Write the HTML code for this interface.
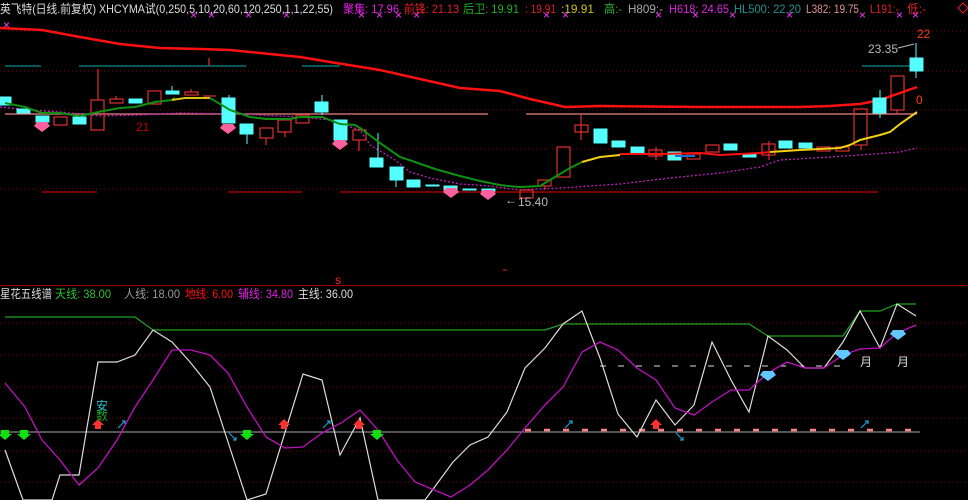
<!DOCTYPE html>
<html><head><meta charset="utf-8"><style>
html,body{margin:0;padding:0;background:#000;width:968px;height:500px;overflow:hidden}
svg{display:block}
text{font-family:"Liberation Sans","Noto Sans CJK SC",sans-serif;font-size:12px}
</style></head><body>
<svg width="968" height="500" viewBox="0 0 968 500" xmlns="http://www.w3.org/2000/svg">
<!-- grid -->
<g stroke="#8b0000" stroke-dasharray="1,3" stroke-width="1">
<line x1="0" y1="71" x2="968" y2="71"/><line x1="0" y1="110" x2="968" y2="110"/>
<line x1="0" y1="149" x2="968" y2="149"/><line x1="0" y1="189" x2="968" y2="189"/>
<line x1="0" y1="31" x2="968" y2="31"/>
<line x1="0" y1="323" x2="968" y2="323"/><line x1="0" y1="355" x2="968" y2="355"/>
<line x1="0" y1="387" x2="968" y2="387"/><line x1="0" y1="418" x2="968" y2="418"/>
<line x1="0" y1="451" x2="968" y2="451"/><line x1="0" y1="482" x2="968" y2="482"/>
</g>
<line x1="0" y1="285.5" x2="968" y2="285.5" stroke="#a00000"/>
<!-- header -->
<text x="0" y="13" fill="#ddd" textLength="333" lengthAdjust="spacingAndGlyphs">英飞特(日线.前复权) XHCYMA试(0,250,5,10,20,60,120,250,1,1,22,55)</text>
<text x="343" y="13" fill="#e020e0" textLength="56" lengthAdjust="spacingAndGlyphs">聚集: 17.96</text>
<text x="404" y="13" fill="#e02020" textLength="55" lengthAdjust="spacingAndGlyphs">前锋: 21.13</text>
<text x="463" y="13" fill="#20b020" textLength="56" lengthAdjust="spacingAndGlyphs">后卫: 19.91</text>
<text x="525" y="13" fill="#e02020" textLength="31" lengthAdjust="spacingAndGlyphs">: 19.91</text>
<text x="561" y="13" fill="#d0c020" textLength="33" lengthAdjust="spacingAndGlyphs">:19.91</text>
<text x="604" y="13" fill="#30b030" textLength="18" lengthAdjust="spacingAndGlyphs">高:-</text>
<text x="628" y="13" fill="#aaa" textLength="35" lengthAdjust="spacingAndGlyphs">H809:-</text>
<text x="669" y="13" fill="#e020e0" textLength="60" lengthAdjust="spacingAndGlyphs">H618: 24.65</text>
<text x="734" y="13" fill="#209090" textLength="67" lengthAdjust="spacingAndGlyphs">HL500: 22.20</text>
<text x="806" y="13" fill="#e09090" textLength="53" lengthAdjust="spacingAndGlyphs">L382: 19.75</text>
<text x="870" y="13" fill="#e02020" textLength="29" lengthAdjust="spacingAndGlyphs">L191:-</text>
<text x="907" y="13" fill="#e02020" textLength="19" lengthAdjust="spacingAndGlyphs">低:-</text>
<path d="M958 8 L963 3 L968 8 L963 13Z" fill="none" stroke="#e02020"/>
<text x="3" y="29" fill="#ff40ff" font-size="8">×</text>
<g fill="#ff30ff">
<text x="190" y="19" font-size="8">×</text><text x="208" y="19" font-size="8">×</text><text x="245" y="19" font-size="8">×</text><text x="283" y="19" font-size="8">×</text><text x="358" y="19" font-size="8">×</text><text x="376" y="19" font-size="8">×</text><text x="395" y="19" font-size="8">×</text><text x="413" y="19" font-size="8">×</text><text x="543" y="19" font-size="8">×</text><text x="562" y="19" font-size="8">×</text><text x="655" y="19" font-size="8">×</text><text x="692" y="19" font-size="8">×</text><text x="729" y="19" font-size="8">×</text><text x="786" y="19" font-size="8">×</text><text x="859" y="19" font-size="8">×</text><text x="896" y="19" font-size="8">×</text><text x="912" y="19" font-size="8">×</text>
</g>
<!-- horizontal refs -->
<g stroke="#0a8a8a" stroke-width="1.2"><line x1="5" y1="66" x2="41" y2="66"/><line x1="79" y1="66" x2="246" y2="66"/><line x1="302" y1="66" x2="340" y2="66"/><line x1="862" y1="66" x2="915" y2="66"/></g>
<g stroke="#f08080" stroke-width="1.2"><line x1="5" y1="114" x2="488" y2="114"/><line x1="526" y1="114" x2="917" y2="114"/></g>
<g stroke="#c00000" stroke-width="1.2"><line x1="42" y1="192" x2="97" y2="192"/><line x1="228" y1="192" x2="302" y2="192"/><line x1="340" y1="192" x2="878" y2="192"/></g>
<!-- MA250 red -->
<polyline fill="none" stroke="#ff1010" stroke-width="2.5" points="0,28 42,30 80,37 120,44 160,48 200,49 230,50 260,53 300,57 330,62 380,70 420,79 460,88 500,91 530,99 565,107 600,106 700,107 800,107 830,106 860,104 880,100 900,93 917,87"/>
<!-- magenta dotted -->
<polyline fill="none" stroke="#c020c0" stroke-width="1.3" stroke-dasharray="2,2" points="0,107 30,110 60,112 100,116 140,115 180,113 240,114 300,117 330,120 360,130 370,145 395,160 410,172 430,178 460,184 490,186 520,190 560,188 620,184 670,178 720,173 760,167 780,160 830,157 860,155 900,152 917,148"/>
<!-- candles -->
<g stroke="#54ffff" fill="#54ffff">
<line x1="322" y1="95" x2="322" y2="115"/><line x1="378" y1="133" x2="378" y2="158"/><line x1="396" y1="180" x2="396" y2="187"/><line x1="247" y1="134" x2="247" y2="144"/><line x1="172" y1="86" x2="172" y2="91"/><line x1="880" y1="90" x2="880" y2="118"/><line x1="916" y1="43" x2="916" y2="78"/><line x1="229" y1="95" x2="229" y2="98"/>
<rect x="0" y="97" width="11" height="8"/><rect x="17" y="109" width="13" height="4"/><rect x="36" y="116" width="13" height="6"/><rect x="73" y="117" width="13" height="7"/><rect x="129" y="99" width="13" height="4"/><rect x="166" y="91" width="13" height="3"/><rect x="222" y="98" width="13" height="25"/><rect x="240" y="124" width="13" height="10"/><rect x="315" y="102" width="13" height="10"/><rect x="334" y="120" width="13" height="20"/><rect x="370" y="158" width="13" height="9"/><rect x="390" y="167" width="13" height="13"/><rect x="407" y="180" width="13" height="7"/><rect x="426" y="185" width="13" height="1"/><rect x="444" y="186" width="13" height="4"/><rect x="463" y="189" width="13" height="1"/><rect x="482" y="189" width="13" height="2"/>
<rect x="594" y="129" width="13" height="14"/><rect x="612" y="141" width="13" height="6"/><rect x="631" y="147" width="13" height="6"/><rect x="668" y="152" width="13" height="8"/><rect x="724" y="144" width="13" height="6"/><rect x="743" y="154" width="13" height="3"/><rect x="779" y="141" width="13" height="7"/><rect x="799" y="143" width="13" height="5"/><rect x="873" y="98" width="13" height="15"/><rect x="910" y="58" width="13" height="13"/>
</g>
<g stroke="#e03030" fill="none" stroke-width="1.2">
<line x1="98" y1="69" x2="98" y2="100"/><line x1="209" y1="58" x2="209" y2="66"/><line x1="266" y1="138" x2="266" y2="145"/><line x1="285" y1="132" x2="285" y2="137"/><line x1="359" y1="140" x2="359" y2="151"/><line x1="116" y1="96" x2="116" y2="99"/><line x1="191" y1="89" x2="191" y2="92"/><line x1="581" y1="115" x2="581" y2="140"/><line x1="656" y1="147" x2="656" y2="160"/><line x1="769" y1="141" x2="769" y2="160"/><line x1="861" y1="145" x2="861" y2="150"/><line x1="897" y1="110" x2="897" y2="114"/><line x1="545" y1="186" x2="545" y2="190"/>
<rect x="54" y="117" width="13" height="8"/><rect x="91" y="100" width="13" height="30"/><rect x="110" y="99" width="13" height="4"/><rect x="148" y="91" width="13" height="13"/><rect x="185" y="92" width="13" height="3"/><line x1="203" y1="96" x2="216" y2="96"/><rect x="260" y="128" width="13" height="10"/><rect x="278" y="120" width="13" height="12"/><rect x="296" y="115" width="13" height="8"/><rect x="353" y="130" width="13" height="10"/>
<rect x="520" y="190" width="13" height="8"/><rect x="538" y="180" width="13" height="6"/><rect x="557" y="147" width="13" height="30"/><rect x="575" y="125" width="13" height="7"/><rect x="649" y="150" width="13" height="6"/><rect x="687" y="154" width="13" height="5"/><rect x="706" y="145" width="13" height="7"/><rect x="762" y="144" width="13" height="11"/><rect x="817" y="147" width="13" height="4"/><rect x="836" y="147" width="13" height="4"/><rect x="854" y="109" width="13" height="36"/><rect x="891" y="76" width="13" height="34"/>
</g>
<!-- MA green/yellow/red -->
<polyline fill="none" stroke="#109010" stroke-width="2" points="5,103 25,107 42,113 60,113 80,116 98,112 120,108 135,107 155,102 172,100 175,98"/>
<polyline fill="none" stroke="#e0c010" stroke-width="2" points="172,100 185,98 210,98"/>
<polyline fill="none" stroke="#109010" stroke-width="2" points="210,98 230,110 250,117 266,119 290,119 300,117 322,117 340,124 355,125 360,128 380,143 400,157 415,162 435,169 460,176 480,181 500,185 508,186 520,187 540,186 545,183 555,177 570,168 582,162"/>
<polyline fill="none" stroke="#f0d010" stroke-width="2" points="582,162 600,157 620,155"/>
<polyline fill="none" stroke="#ff1010" stroke-width="2" points="620,154 660,154 700,153 720,155 760,153 770,152"/>
<polyline fill="none" stroke="#2070d0" stroke-width="2" points="675,156 695,156"/>
<polyline fill="none" stroke="#f0d010" stroke-width="2" points="770,152 800,150 840,148 850,145 860,140 880,135 890,132 900,124 917,112"/>
<!-- gems -->
<g fill="#ff60a0"><path d="M37 122h10l3 4-8 6-8-6z"/><path d="M223 124h10l3 4-8 6-8-6z"/><path d="M335 140h10l3 4-8 6-8-6z"/><path d="M446 188h10l3 4-8 6-8-6z"/><path d="M483 190h10l3 4-8 6-8-6z"/></g>
<!-- labels main -->
<text x="136" y="131" fill="#c00000">21</text>
<text x="518" y="206" fill="#bbb">15.40</text><text x="505" y="204" fill="#bbb" font-size="10">←</text>
<text x="868" y="53" fill="#bbb">23.35</text>
<line x1="898" y1="48" x2="914" y2="44" stroke="#bbb"/>
<text x="917" y="38" fill="#ff4010">22</text>
<text x="916" y="104" fill="#ff4010">0</text>
<text x="335" y="284" fill="#ff2020" font-size="11">s</text>
<line x1="503" y1="270" x2="507" y2="270" stroke="#ff2020"/>
<!-- lower labels -->
<text x="0" y="298" fill="#ddd" textLength="52" lengthAdjust="spacingAndGlyphs">星花五线谱</text>
<text x="55" y="298" fill="#30c030" textLength="56" lengthAdjust="spacingAndGlyphs">天线: 38.00</text>
<text x="124" y="298" fill="#999" textLength="56" lengthAdjust="spacingAndGlyphs">人线: 18.00</text>
<text x="185" y="298" fill="#ff1010" textLength="48" lengthAdjust="spacingAndGlyphs">地线: 6.00</text>
<text x="238" y="298" fill="#e020e0" textLength="55" lengthAdjust="spacingAndGlyphs">辅线: 34.80</text>
<text x="298" y="298" fill="#ddd" textLength="55" lengthAdjust="spacingAndGlyphs">主线: 36.00</text>
<!-- lower lines -->
<line x1="0" y1="432" x2="920" y2="432" stroke="#aaa" stroke-width="1"/>
<line x1="525" y1="430" x2="920" y2="430" stroke="#ff8080" stroke-width="2.5" stroke-dasharray="6,13"/>
<line x1="600" y1="366" x2="850" y2="366" stroke="#ddd" stroke-dasharray="6,12"/>
<polyline fill="none" stroke="#20a020" stroke-width="1.2" points="5,317 135,317 153,330 545,330 563,324 749,324 768,336 843,336 860,311 880,311 897,304 916,304"/>
<polyline fill="none" stroke="#ddd" stroke-width="1.2" points="5,450 23,500 52,500 60,475 79,475 98,362 117,362 135,355 153,330 172,342 190,362 210,387 247,500 266,494 303,374 322,380 340,455 360,418 378,500 425,500 453,462 470,445 488,437 507,412 525,368 545,348 563,324 582,311 600,358 618,414 637,437 656,400 675,425 694,405 712,342 731,380 749,412 768,336 787,350 805,368 824,368 843,342 860,311 880,348 897,304 916,316"/>
<polyline fill="none" stroke="#c010c0" stroke-width="1.3" points="5,383 25,407 42,440 60,460 79,485 98,468 117,440 135,407 153,380 172,350 191,350 210,355 228,373 247,407 266,437 285,448 303,447 322,433 341,423 360,410 378,430 397,460 415,482 451,497 470,485 488,470 507,450 525,428 545,405 563,387 582,352 600,342 618,350 637,368 656,380 675,408 694,415 712,402 731,390 749,390 768,373 787,362 805,368 824,368 843,355 860,349 880,348 897,333 916,325"/>
<!-- arrows -->
<g fill="#10e010"><path d="M1 430h8v4h3l-7 6-7-6h3z"/><path d="M20 430h8v4h3l-7 6-7-6h3z"/><path d="M243 430h8v4h3l-7 6-7-6h3z"/><path d="M373 430h8v4h3l-7 6-7-6h3z"/></g>
<g fill="#ff3030"><path d="M95 429v-4h-3l6-6 6 6h-3v4z"/><path d="M281 429v-4h-3l6-6 6 6h-3v4z"/><path d="M356 429v-4h-3l6-6 6 6h-3v4z"/><path d="M653 429v-4h-3l6-6 6 6h-3v4z"/></g>
<g stroke="#20a0d0" stroke-width="1.2" fill="none"><path d="M118 428l7-7m-3 0h3v3"/><path d="M323 428l7-7m-3 0h3v3"/><path d="M565 428l7-7m-3 0h3v3"/><path d="M861 428l7-7m-3 0h3v3"/><path d="M229 433l7 7m0-3v3h-3"/><path d="M676 433l7 7m0-3v3h-3"/></g>
<text x="96" y="410" fill="#20c0d0" font-size="10">安</text>
<text x="96" y="420" fill="#20a020" font-size="10">数</text>
<g fill="#60c8ff"><path d="M763 371h10l3 4-8 6-8-6z"/><path d="M838 350h10l3 4-8 6-8-6z"/><path d="M893 330h10l3 4-8 6-8-6z"/></g>
<text x="860" y="366" fill="#ddd">月</text><text x="897" y="366" fill="#ddd">月</text>
</svg>
</body></html>
